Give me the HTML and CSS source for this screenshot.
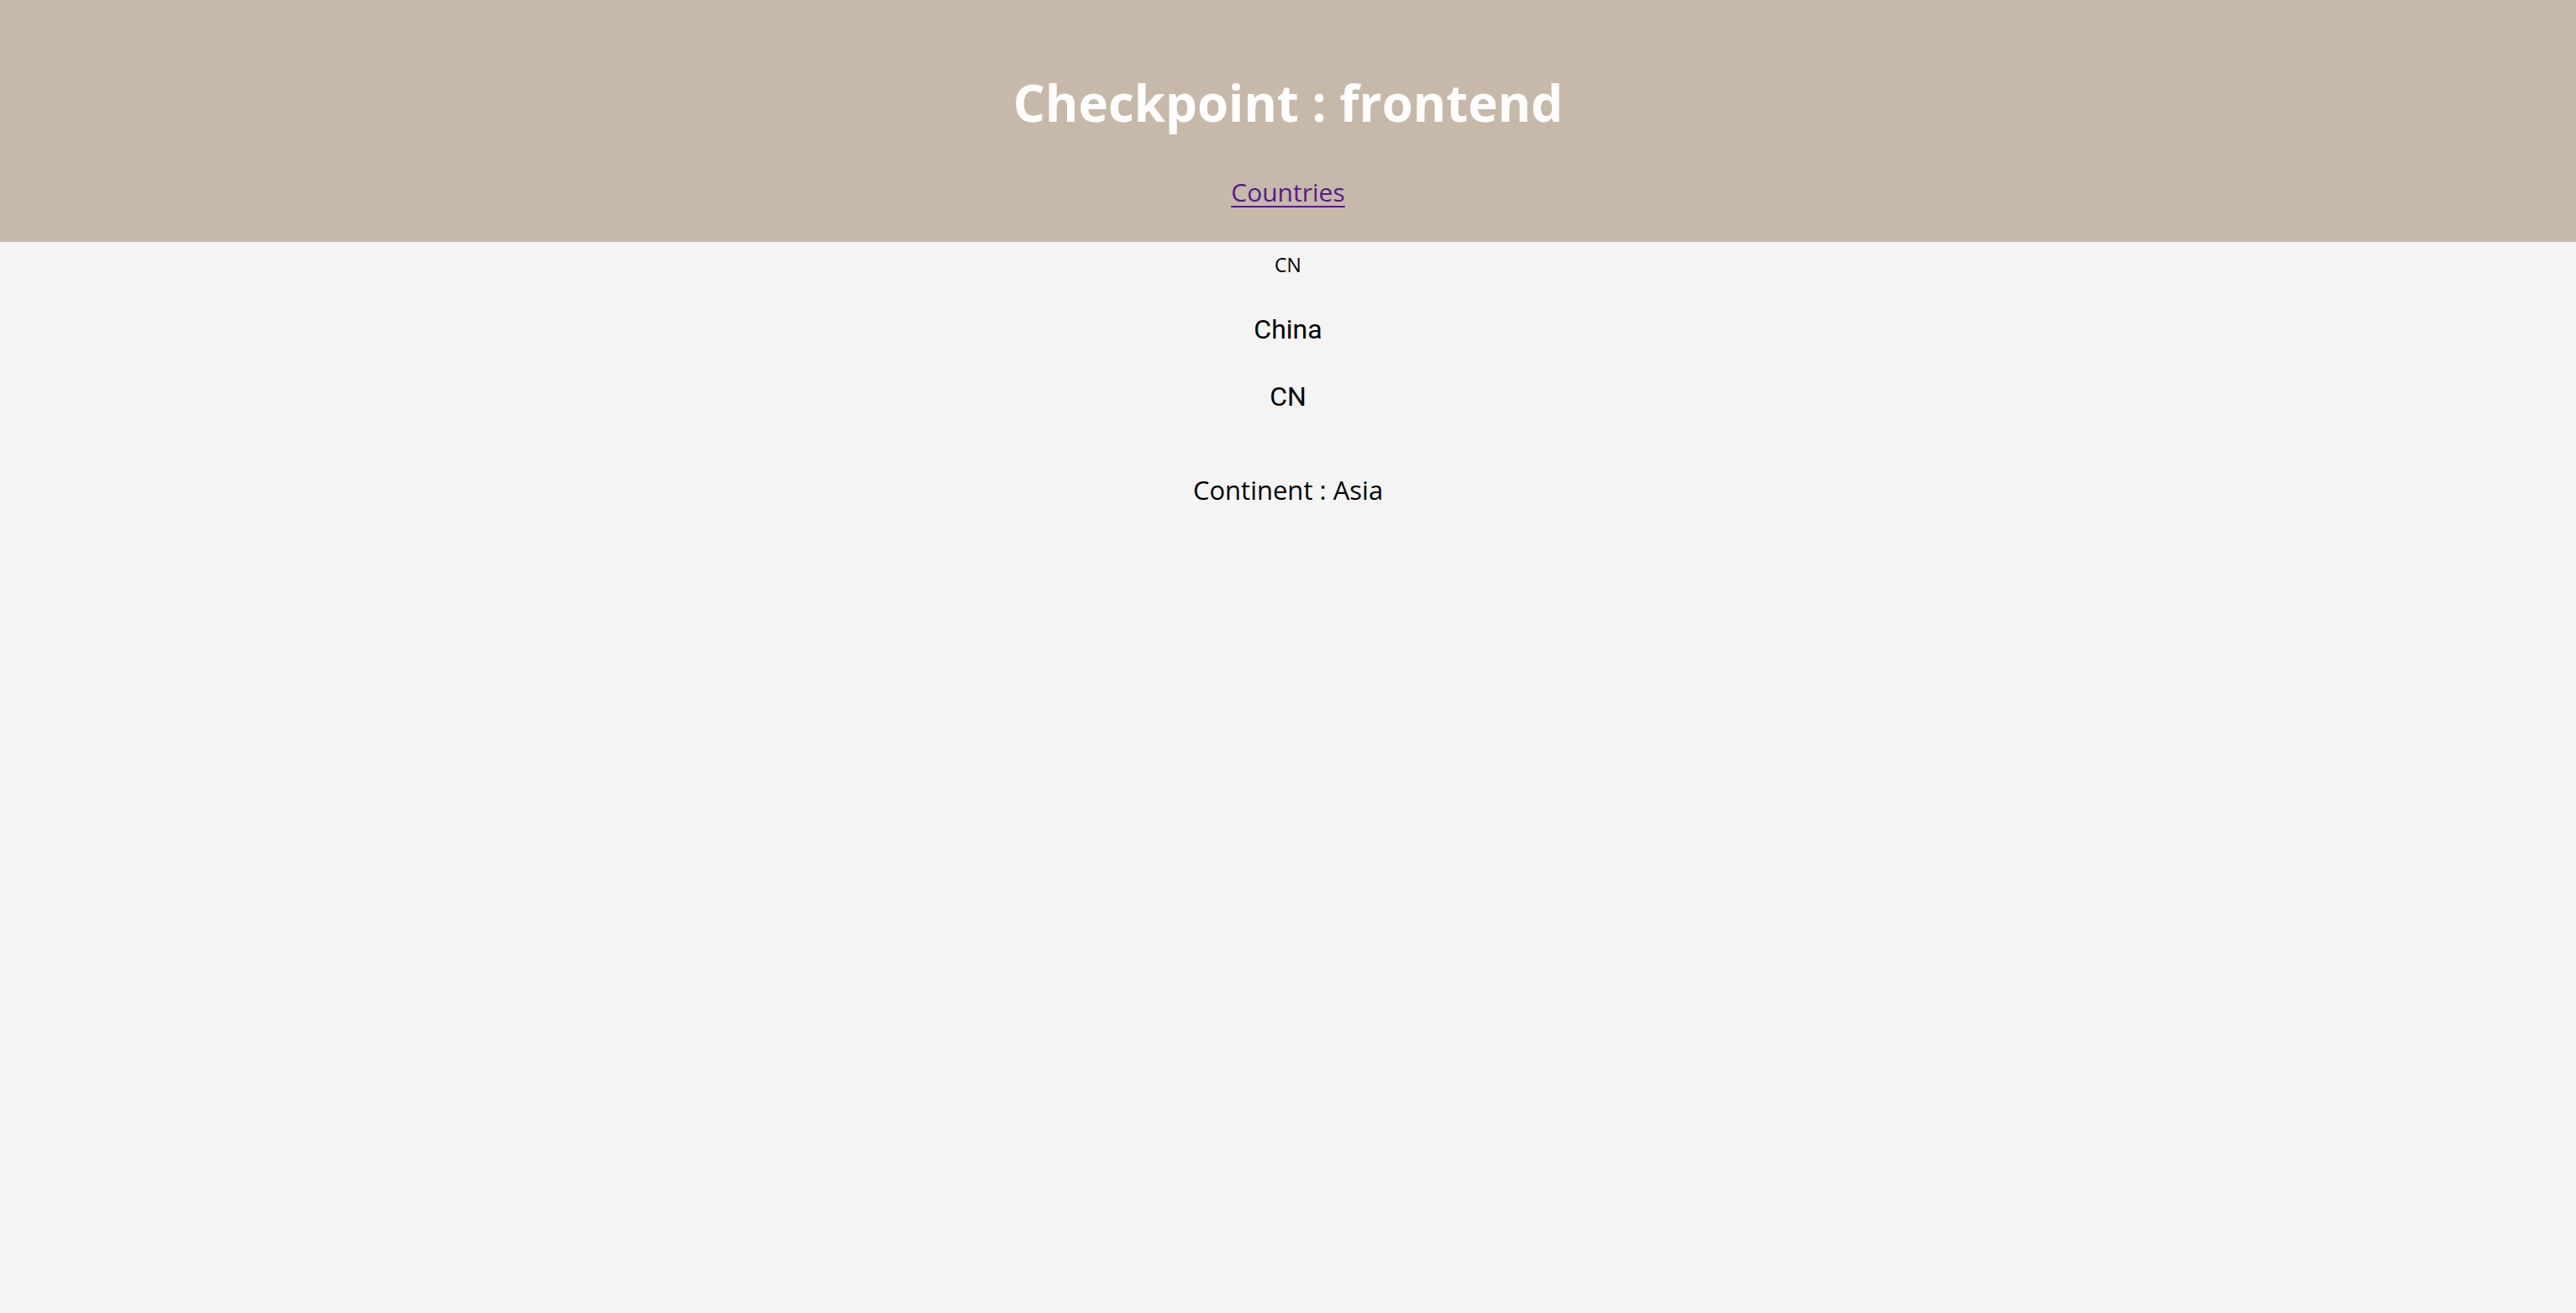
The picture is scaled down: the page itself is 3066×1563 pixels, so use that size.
FILE: index.html
```html
<!DOCTYPE html>
<html lang="en">
<head>
<meta charset="utf-8">
<title>Checkpoint : frontend</title>
<link rel="stylesheet" href="styles.css">
</head>
<body>
<header class="site-header">
  <h1 class="site-title">Checkpoint : frontend</h1>
  <nav class="site-nav"><a class="nav-link" href="#">Countries</a></nav>
</header>
<main class="country">
  <div class="country-flag">CN</div>
  <p class="country-name">China</p>
  <p class="country-code">CN</p>
  <p class="country-continent">Continent : Asia</p>
</main>
</body>
</html>
```
FILE: styles.css
```css
html, body {
  margin: 0;
  padding: 0;
}
body {
  background: #f4f4f4;
  color: #000;
  font-family: "Open Sans", "Noto Sans", sans-serif;
  min-height: 100vh;
}
.site-header {
  background: #c6b9a9;
  height: 288px;
  box-sizing: border-box;
  padding-top: 86px;
  display: flex;
  flex-direction: column;
  align-items: center;
}
.site-title {
  margin: 0;
  color: #fff;
  font-family: "Open Sans", "Noto Sans", sans-serif;
  font-weight: 700;
  font-size: 60px;
  line-height: 72px;
  letter-spacing: 0;
}
.site-nav {
  margin-top: 51px;
  font-size: 30px;
  line-height: 40px;
}
.nav-link {
  color: #551a8b;
  text-decoration: underline;
  text-underline-offset: 5px;
  text-decoration-thickness: 2px;
}
.country {
  display: flex;
  flex-direction: column;
  align-items: center;
}
.country-flag {
  margin-top: 12px;
  font-size: 23px;
  line-height: 30px;
}
.country-name,
.country-code {
  margin: 0;
  font-family: Roboto, "Noto Sans", sans-serif;
  font-size: 32px;
  line-height: 40px;
}
.country-name {
  margin-top: 42px;
}
.country-code {
  margin-top: 40px;
}
.country-continent {
  margin: 71px 0 0;
  font-size: 31px;
  line-height: 40px;
}
```
